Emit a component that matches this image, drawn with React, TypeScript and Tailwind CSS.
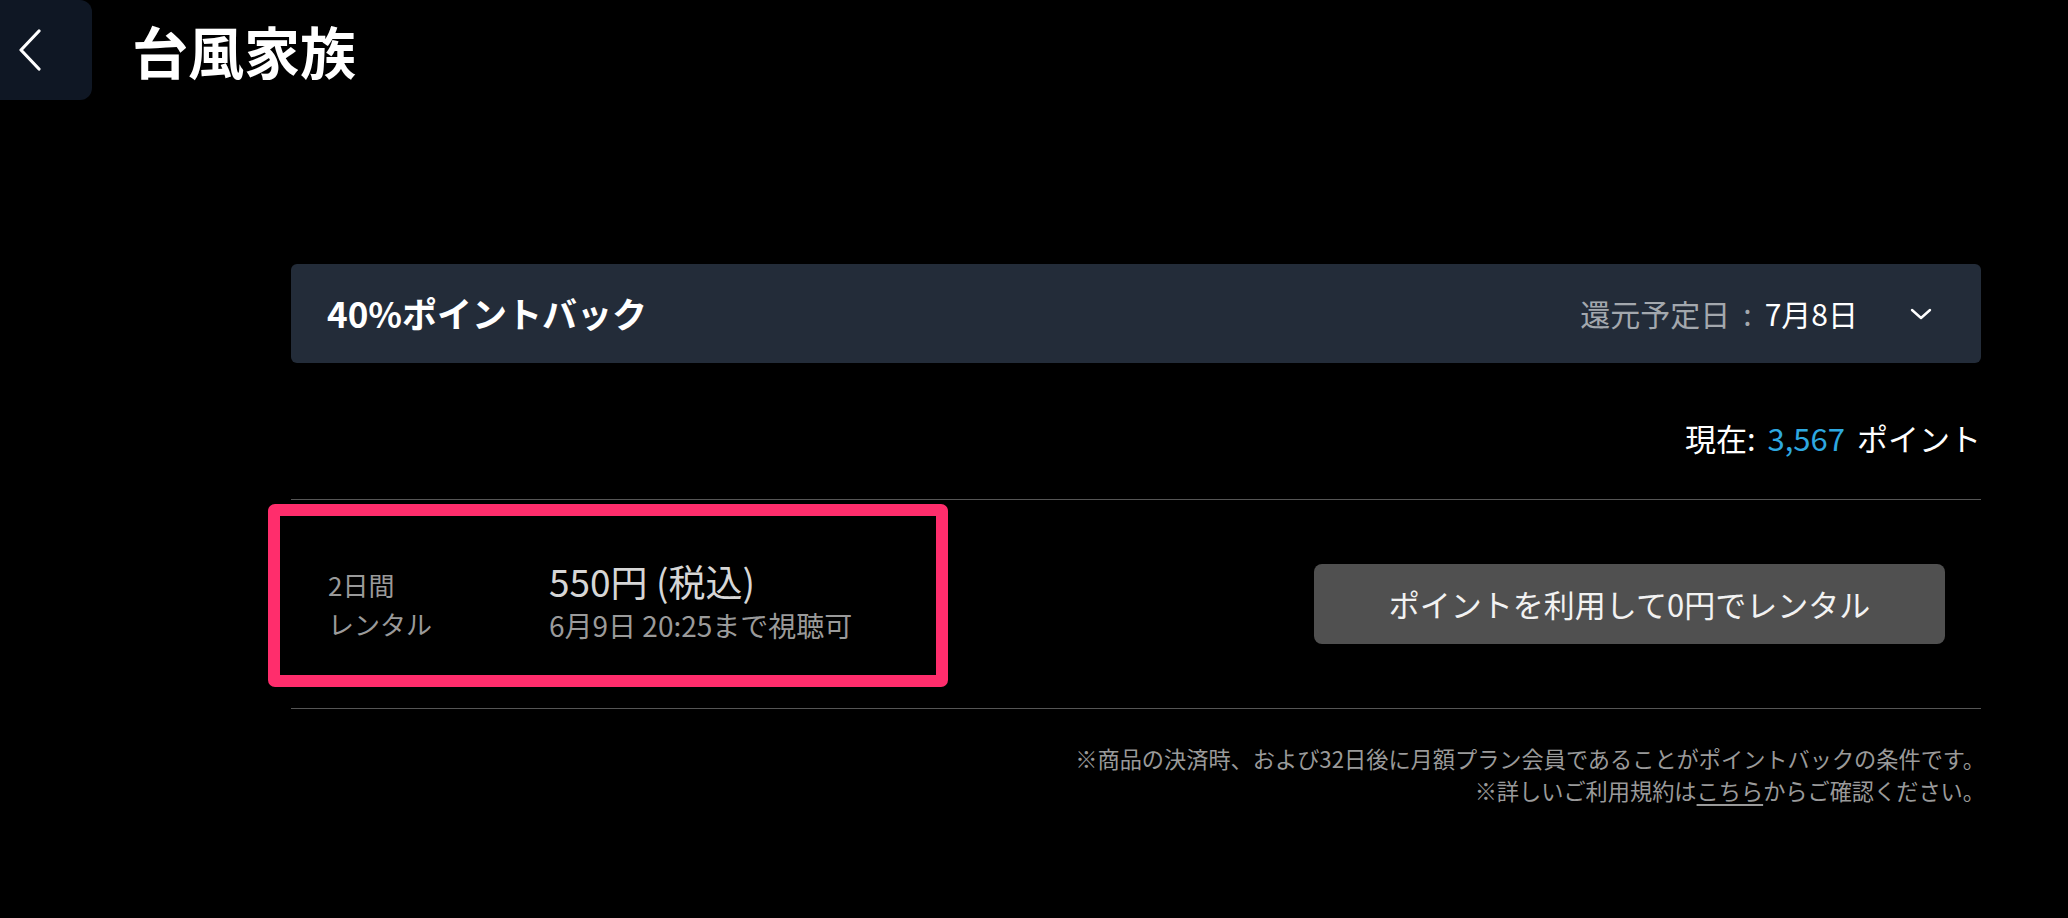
import React from 'react';

const jp = { fontFamily: '"Noto Sans CJK JP", "Noto Sans", sans-serif' };

function BackButton() {
  return (
    <button className="flex h-[100px] w-[92px] shrink-0 items-center rounded-r-[12px] bg-[#0f1724] pl-[17px]">
      <svg width="26" height="42" viewBox="0 0 26 42" fill="none">
        <polyline
          points="22,2 4,21 22,40"
          stroke="white"
          strokeWidth="3.2"
          strokeLinecap="round"
          strokeLinejoin="round"
        />
      </svg>
    </button>
  );
}

function PointBackPanel() {
  return (
    <div className="flex h-[99px] items-center justify-between rounded-[6px] bg-[#232c39] pl-[36px] pr-[49px]">
      <span className="text-[35px] font-bold text-white">40%ポイントバック</span>
      <div className="flex items-center text-[30px]">
        <span className="text-[#a3a8ae]">還元予定日</span>
        <span className="mx-[13px] text-[#a3a8ae]">:</span>
        <span className="text-white">7月8日</span>
        <svg className="ml-[52px]" width="22" height="14" viewBox="0 0 22 14" fill="none">
          <polyline
            points="2,3 11,11 20,3"
            stroke="white"
            strokeWidth="2.4"
            strokeLinecap="round"
            strokeLinejoin="round"
          />
        </svg>
      </div>
    </div>
  );
}

function RentalRow() {
  return (
    <div className="relative flex h-[208px] items-center">
      {/* highlight annotation */}
      <div className="pointer-events-none absolute left-[-23px] top-[4px] h-[183px] w-[680px] rounded-[7px] border-[12px] border-[#ff2d6c]" />
      <div className="ml-[37px] w-[221px] text-[26px] leading-[39px] text-[#9a9a9a]">
        <div>2日間</div>
        <div>レンタル</div>
      </div>
      <div>
        <div className="text-[37px] leading-[42px] text-[#d6d6d6]">550円 (税込)</div>
        <div className="text-[28px] leading-[46px] text-[#9a9a9a]">6月9日 20:25まで視聴可</div>
      </div>
      <button className="ml-auto mr-[36px] flex h-[80px] w-[631px] items-center justify-center rounded-[8px] bg-[#505050] text-[31px] text-[#f2f2f2]">
        ポイントを利用して0円でレンタル
      </button>
    </div>
  );
}

export default function App() {
  return (
    <div className="h-[918px] w-[2068px] overflow-hidden bg-black" style={jp}>
      <header className="flex h-[100px] items-center">
        <BackButton />
        <h1 className="ml-[40px] text-[56px] font-bold text-white">台風家族</h1>
      </header>

      <main className="ml-[291px] mt-[164px] w-[1690px]">
        <PointBackPanel />

        <div className="flex h-[136px] items-center justify-end pt-[14px] text-[31px] text-white">
          <span>現在:</span>
          <span className="mx-[12px] text-[#2ea8e0]">3,567</span>
          <span>ポイント</span>
        </div>

        <div className="h-px bg-[#555555]" />
        <RentalRow />
        <div className="h-px bg-[#555555]" />

        <div className="mr-[-4px] pt-[33px] text-right text-[22.2px] leading-[32px] text-[#9a9a9a]">
          <p>※商品の決済時、および32日後に月額プラン会員であることがポイントバックの条件です。</p>
          <p>
            ※詳しいご利用規約は<span className="underline underline-offset-4">こちら</span>からご確認ください。
          </p>
        </div>
      </main>
    </div>
  );
}
